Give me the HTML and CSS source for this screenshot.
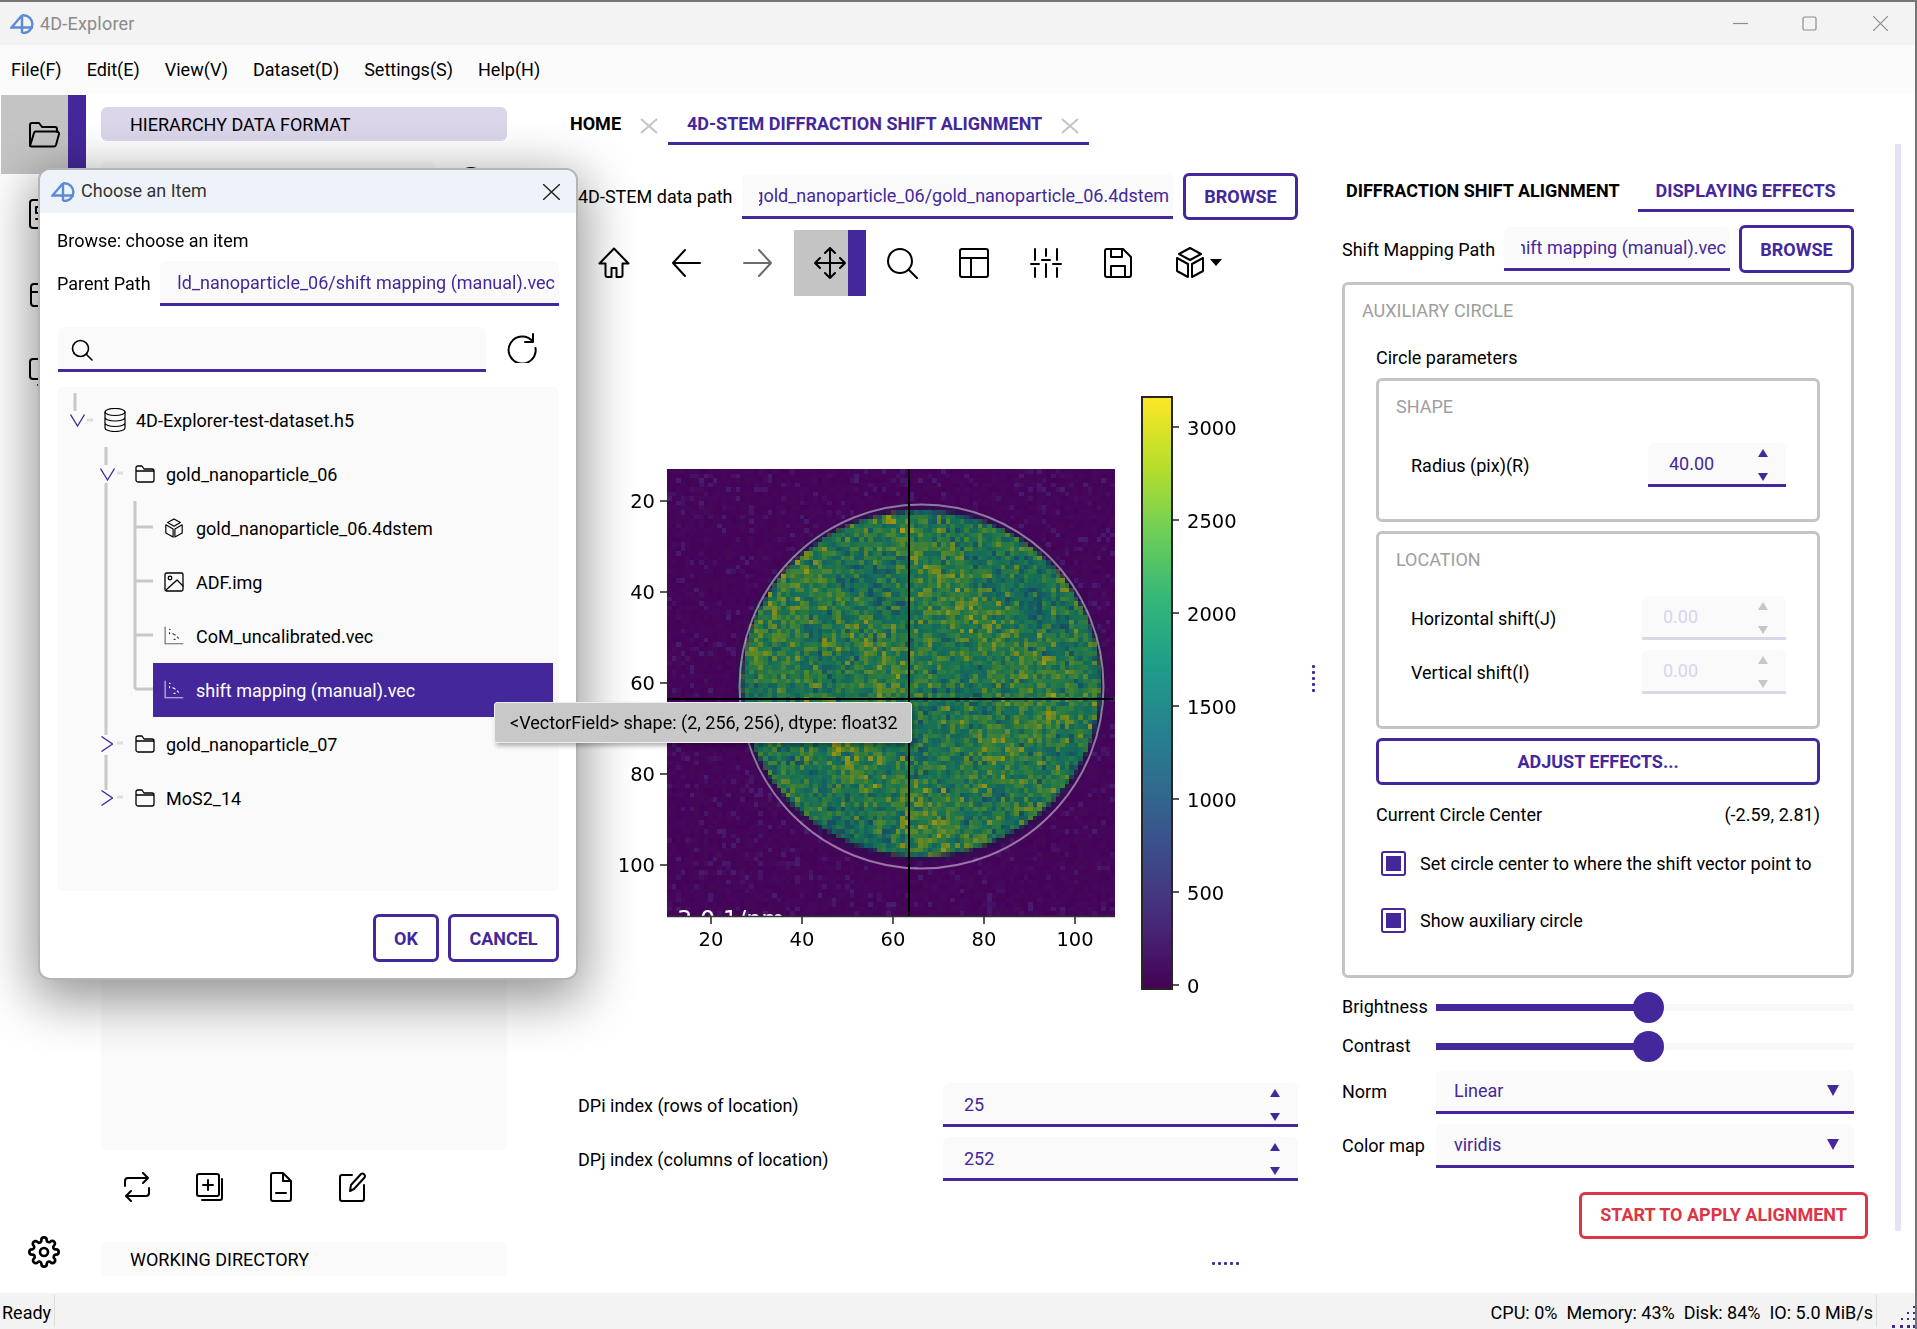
FILE: index.html
```html
<!DOCTYPE html>
<html lang="en">
<head>
<meta charset="utf-8">
<title>4D-Explorer</title>
<link rel="stylesheet" href="styles.css">
</head>
<body>
<div class="app">
  <header class="titlebar">
    <svg class="logo" viewBox="0 0 24 20"><path d="M12 1.2 1.5 13.5H23M12 1.2V19M12 1.2h1.5a8.9 8.9 0 0 1 0 17.8H12"/></svg>
    <span class="app-name">4D-Explorer</span>
    <div class="win-btns">
      <svg class="win-min" viewBox="0 0 15 15"><path d="M0 7.5h15"/></svg>
      <svg class="win-max" viewBox="0 0 15 15"><rect x="1" y="1" width="13" height="13" rx="1.5"/></svg>
      <svg class="win-close" viewBox="0 0 15 15"><path d="M0 0l15 15M15 0 0 15"/></svg>
    </div>
  </header>
  <nav class="menubar">
    <span>File(F)</span><span>Edit(E)</span><span>View(V)</span><span>Dataset(D)</span><span>Settings(S)</span><span>Help(H)</span>
  </nav>
  <div class="workspace">
    <aside class="activity">
      <div class="act-item act-selected">
        <svg class="ico ico-32" viewBox="0 0 32 28"><path d="M2 25V4a2 2 0 0 1 2-2h7l3 4h13a2 2 0 0 1 2 2v3M2 25l4-13a2 2 0 0 1 2-1.400h21a2 2 0 0 1 2 2.400l-3 11a2 2 0 0 1-2 1.400H3z"/></svg>
      </div>
      <div class="act-item">
        <svg class="ico ico-32" viewBox="0 0 32 32"><rect x="2" y="2" width="28" height="28" rx="3"/><path d="M8 9h10M8 9v6h8v6H8"/></svg>
      </div>
      <div class="act-item">
        <svg class="ico ico-32" viewBox="0 0 32 32"><rect x="3" y="7" width="26" height="22" rx="3"/><path d="M3 15h26M11 7l6-5 6 5"/></svg>
      </div>
      <div class="act-item">
        <svg class="ico ico-32" viewBox="0 0 32 32"><rect x="2" y="3" width="28" height="20" rx="3"/><path d="M16 23v5M10 29h12"/></svg>
      </div>
      <div class="act-gear">
        <svg class="ico ico-32" viewBox="0 0 24 24"><circle cx="12" cy="12" r="3"/><path d="M19.400 15a1.650 1.650 0 0 0 .33 1.820l.06.06a2 2 0 1 1-2.830 2.830l-.06-.06a1.650 1.650 0 0 0-2.820 1.170V21a2 2 0 0 1-4 0v-.09A1.650 1.650 0 0 0 7.260 19.740l-.06.06a2 2 0 1 1-2.830-2.830l.06-.06A1.650 1.650 0 0 0 3.090 14H3a2 2 0 0 1 0-4h.09A1.650 1.650 0 0 0 4.260 7.260l-.06-.06a2 2 0 1 1 2.830-2.830l.06.06A1.650 1.650 0 0 0 10 3.090V3a2 2 0 0 1 4 0v.09a1.650 1.650 0 0 0 2.740 1.170l.06-.06a2 2 0 1 1 2.830 2.830l-.06.06A1.650 1.650 0 0 0 20.910 10H21a2 2 0 0 1 0 4h-.09a1.650 1.650 0 0 0-1.510 1z"/></svg>
      </div>
    </aside>

    <section class="panel">
      <div class="panel-head panel-head-on">HIERARCHY DATA FORMAT</div>
      <div class="panel-search">
        <div class="panel-search-box"></div>
        <svg class="ico ico-30" viewBox="0 0 30 30"><circle cx="15" cy="15" r="13"/></svg>
      </div>
      <div class="panel-list"></div>
      <div class="panel-tools">
        <span class="tool"><svg class="ico ico-30" viewBox="0 0 30 30"><path d="M21 1l5 5-5 5M26 6H6a3 3 0 0 0-3 3v5M9 29l-5-5 5-5M4 24h20a3 3 0 0 0 3-3v-5"/></svg></span>
        <span class="tool"><svg class="ico ico-30" viewBox="0 0 30 30"><path d="M5 2h18a2 2 0 0 1 2 2v18a2 2 0 0 1-2 2H5a2 2 0 0 1-2-2V4a2 2 0 0 1 2-2zM28 7v19a2 2 0 0 1-2 2H8M14 8v10M9 13h10"/></svg></span>
        <span class="tool"><svg class="ico ico-30" viewBox="0 0 30 30"><path d="M7 1h10l8 8v18a2 2 0 0 1-2 2H7a2 2 0 0 1-2-2V3a2 2 0 0 1 2-2zM17 1v8h8M10 21h10"/></svg></span>
        <span class="tool"><svg class="ico ico-30" viewBox="0 0 30 30"><path d="M14 3H4a2 2 0 0 0-2 2v22a2 2 0 0 0 2 2h20a2 2 0 0 0 2-2V13M12 19l1-6L23 2c2-1.500 5 1 3.500 3.500L16 17z"/></svg></span>
      </div>
      <div class="panel-head panel-head-off">WORKING DIRECTORY</div>
    </section>

    <main class="center">
      <div class="tabs">
        <span class="tab-home">HOME</span>
        <svg class="tab-x" viewBox="0 0 18 16"><path d="M1 1l16 14M17 1 1 15"/></svg>
        <div class="tab-active">
          <span>4D-STEM DIFFRACTION SHIFT ALIGNMENT</span>
          <svg class="tab-x" viewBox="0 0 18 16"><path d="M1 1l16 14M17 1 1 15"/></svg>
        </div>
      </div>
      <div class="path-row">
        <span class="path-label">4D-STEM data path</span>
        <div class="field field-data"><div class="clip"><span>gold_nanoparticle_06/gold_nanoparticle_06.4dstem</span></div></div>
        <button class="btn btn-browse">BROWSE</button>
      </div>
      <div class="toolbar">
        <span class="tb"><svg class="ico ico-32" viewBox="0 0 32 32"><path d="M16 1.500 1.500 16.500h6V28a2 2 0 0 0 2 2h4v-9h5v9h4a2 2 0 0 0 2-2V16.500h6z"/></svg></span>
        <span class="tb"><svg class="ico ico-32" viewBox="0 0 32 32"><path d="M30 16H3M15 3 3 16l12 13"/></svg></span>
        <span class="tb tb-dim"><svg class="ico ico-32" viewBox="0 0 32 32"><path d="M2 16h27M17 3l12 13-12 13"/></svg></span>
        <span class="tb tb-on"><svg class="ico ico-32" viewBox="0 0 32 32"><path d="M16 1v30M1 16h30M11 6l5-5 5 5M11 26l5 5 5-5M6 11l-5 5 5 5M26 11l5 5-5 5"/></svg></span>
        <span class="tb"><svg class="ico ico-32" viewBox="0 0 32 32"><circle cx="14" cy="14" r="12"/><path d="M23 23l8 8"/></svg></span>
        <span class="tb"><svg class="ico ico-32" viewBox="0 0 32 32"><rect x="2" y="2" width="28" height="28" rx="2"/><path d="M2 11h28M13 11v19"/></svg></span>
        <span class="tb"><svg class="ico ico-32" viewBox="0 0 32 32"><path d="M5 2v11M5 21v9M16 2v7M16 17v13M27 2v11M27 21v9M12 13h8M1 17h8M23 17h8"/></svg></span>
        <span class="tb"><svg class="ico ico-32" viewBox="0 0 32 32"><path d="M5 2h16l8 8v18a2 2 0 0 1-2 2H5a2 2 0 0 1-2-2V4a2 2 0 0 1 2-2zM9 2v8h11V2M9 30V19h14v11"/></svg></span>
        <span class="tb tb-3d"><svg class="ico ico-32" viewBox="0 0 32 32"><path d="M16 1l11 6-11 6L5 7zM3 11l11 6v13L3 24zM29 11l-11 6v13l11-6z"/></svg><i class="caret"></i></span>
      </div>

      <div class="plot">
        <canvas class="plot-image" id="diffraction" width="98" height="98"></canvas>
        <svg class="plot-axes" viewBox="578 296 720 787">
          <defs>
            <linearGradient id="viridis" x1="0" y1="1" x2="0" y2="0">
              <stop offset="0" stop-color="#440154"/><stop offset=".11" stop-color="#482878"/><stop offset=".22" stop-color="#3e4989"/><stop offset=".33" stop-color="#31688e"/><stop offset=".44" stop-color="#26828e"/><stop offset=".55" stop-color="#1f9e89"/><stop offset=".66" stop-color="#35b779"/><stop offset=".77" stop-color="#6ece58"/><stop offset=".88" stop-color="#b5de2b"/><stop offset="1" stop-color="#fde725"/>
            </linearGradient>
            <clipPath id="imgclip"><rect x="667" y="469" width="448" height="447"/></clipPath>
          </defs>
          <g clip-path="url(#imgclip)">
            <text class="scale-text" x="677" y="928">3.0 1/nm</text>
            <circle class="aux-circle" cx="921.500" cy="686.500" r="182"/>
          </g>
          <path class="cross" d="M909 469V916M667 699H1113"/>
          <path class="frame" d="M667 916.500H1115"/>
          <path class="tick" d="M660 501h7M660 592h7M660 683h7M660 774h7M660 865h7M711 917v7M802 917v7M893 917v7M984 917v7M1075 917v7"/>
          <g class="ytl">
            <text x="655" y="508">20</text><text x="655" y="599">40</text><text x="655" y="690">60</text><text x="655" y="781">80</text><text x="655" y="872">100</text>
          </g>
          <g class="xtl">
            <text x="711" y="946">20</text><text x="802" y="946">40</text><text x="893" y="946">60</text><text x="984" y="946">80</text><text x="1075" y="946">100</text>
          </g>
          <rect class="cbar" x="1142" y="397" width="30" height="592" fill="url(#viridis)"/>
          <path class="tick" d="M1172 427h7M1172 520h7M1172 613h7M1172 706h7M1172 799h7M1172 892h7M1172 985h7"/>
          <g class="ctl">
            <text x="1187" y="435">3000</text><text x="1187" y="528">2500</text><text x="1187" y="621">2000</text><text x="1187" y="714">1500</text><text x="1187" y="807">1000</text><text x="1187" y="900">500</text><text x="1187" y="993">0</text>
          </g>
        </svg>
      </div>

      <div class="dp-row">
        <span class="dp-label">DPi index (rows of location)</span>
        <div class="spin spin-dp"><span>25</span><div class="arrows"><i class="up"></i><i class="down"></i></div></div>
      </div>
      <div class="dp-row dp-row-2">
        <span class="dp-label">DPj index (columns of location)</span>
        <div class="spin spin-dp"><span>252</span><div class="arrows"><i class="up"></i><i class="down"></i></div></div>
      </div>
      <div class="hsplit"><i></i><i></i><i></i><i></i><i></i></div>
    </main>

    <div class="vsplit"><i></i><i></i><i></i><i></i><i></i></div>

    <aside class="right">
      <div class="rtabs">
        <span class="rtab">DIFFRACTION SHIFT ALIGNMENT</span>
        <span class="rtab rtab-on">DISPLAYING EFFECTS</span>
      </div>
      <div class="shift-row">
        <span class="shift-label">Shift Mapping Path</span>
        <div class="field field-shift"><div class="clip"><span>shift mapping (manual).vec</span></div></div>
        <button class="btn btn-browse">BROWSE</button>
      </div>
      <section class="group group-aux">
        <h3 class="group-title aux-title">AUXILIARY CIRCLE</h3>
        <div class="line line-params">Circle parameters</div>
        <section class="group group-shape">
          <h3 class="group-title">SHAPE</h3>
          <div class="param param-first">
            <span>Radius (pix)(R)</span>
            <div class="spin spin-radius"><span>40.00</span><div class="arrows"><i class="up"></i><i class="down"></i></div></div>
          </div>
        </section>
        <section class="group group-loc">
          <h3 class="group-title">LOCATION</h3>
          <div class="param param-first">
            <span>Horizontal shift(J)</span>
            <div class="spin spin-off"><span>0.00</span><div class="arrows"><i class="up"></i><i class="down"></i></div></div>
          </div>
          <div class="param param-next">
            <span>Vertical shift(I)</span>
            <div class="spin spin-off"><span>0.00</span><div class="arrows"><i class="up"></i><i class="down"></i></div></div>
          </div>
        </section>
        <button class="btn btn-adjust">ADJUST EFFECTS...</button>
        <div class="line line-center"><span>Current Circle Center</span><span>(-2.59, 2.81)</span></div>
        <label class="check check-1"><i class="box"></i><span>Set circle center to where the shift vector point to</span></label>
        <label class="check check-2"><i class="box"></i><span>Show auxiliary circle</span></label>
      </section>
      <div class="ctrl ctrl-bright">
        <span class="ctrl-label">Brightness</span>
        <div class="slider"><div class="slider-fill"></div><i class="thumb"></i></div>
      </div>
      <div class="ctrl ctrl-contrast">
        <span class="ctrl-label">Contrast</span>
        <div class="slider"><div class="slider-fill"></div><i class="thumb"></i></div>
      </div>
      <div class="ctrl ctrl-norm">
        <span class="ctrl-label">Norm</span>
        <div class="combo"><span>Linear</span><i class="combo-arrow"></i></div>
      </div>
      <div class="ctrl ctrl-cmap">
        <span class="ctrl-label">Color map</span>
        <div class="combo"><span>viridis</span><i class="combo-arrow"></i></div>
      </div>
      <button class="btn btn-start">START TO APPLY ALIGNMENT</button>
    </aside>
    <div class="scrolltrack"></div>
  </div>
  <footer class="statusbar">
    <span class="st-ready">Ready</span>
    <i class="st-sep"></i>
    <span class="st-res">CPU: 0%&nbsp;&nbsp;Memory: 43%&nbsp;&nbsp;Disk: 84%&nbsp;&nbsp;IO: 5.0 MiB/s</span>
    <i class="st-sep"></i>
    <svg class="grip" viewBox="0 0 24 24"><path d="M22 2h2v2h-2zM16 8h2v2h-2zM22 8h2v2h-2zM10 14h2v2h-2zM16 14h2v2h-2zM22 14h2v2h-2zM1 21h3v3H1zM9 21h3v3H9zM16 21h3v3h-3zM22 21h2v3h-2z"/></svg>
  </footer>
</div>

<div class="dialog">
  <div class="dlg-head">
    <svg class="logo" viewBox="0 0 24 20"><path d="M12 1.2 1.5 13.500H23M12 1.2V19M12 1.2h1.500a8.900 8.900 0 0 1 0 17.800H12"/></svg>
    <span class="dlg-title">Choose an Item</span>
    <svg class="dlg-close" viewBox="0 0 17 16"><path d="M0 0l17 16M17 0 0 16"/></svg>
  </div>
  <div class="dlg-body">
    <div class="dlg-browse">Browse: choose an item</div>
    <div class="dlg-parent">
      <span class="dlg-parent-label">Parent Path</span>
      <div class="field field-parent"><div class="clip"><span>gold_nanoparticle_06/shift mapping (manual).vec</span></div></div>
    </div>
    <div class="dlg-search">
      <div class="searchbox"><svg class="ico ico-search" viewBox="0 0 22 22"><circle cx="9.500" cy="9.500" r="8"/><path d="M15 15l6 6"/></svg></div>
      <svg class="ico ico-refresh" viewBox="0 0 32 32"><path d="M27 3v8h-8M27 11A13.500 13.500 0 1 0 29.500 17"/></svg>
    </div>
    <div class="tree">
      <svg class="tree-lines" viewBox="0 0 502 504">
        <path d="M18 6v18M49 60v18M49 96v252M49 368v35M78 114v188M78 140h18M78 194h18M78 248h18M78 302h18"/>
        <path class="stub" d="M30 33h6M60 86h6M60 356h6M60 410h6"/>
      </svg>
      <div class="row d0">
        <svg class="chev" viewBox="0 0 15 13"><path d="M0.500 0.500 7.500 12 14.500 0.500"/></svg>
        <svg class="ico ico-node ico-db" viewBox="0 0 22 24"><ellipse cx="11" cy="4" rx="10" ry="3.500"/><path d="M1 4v16c0 2 4.500 3.500 10 3.500s10-1.500 10-3.500V4M1 9.500c0 2 4.500 3.500 10 3.500s10-1.500 10-3.500M1 15c0 2 4.500 3.500 10 3.500S21 17 21 15"/></svg>
        <span>4D-Explorer-test-dataset.h5</span>
      </div>
      <div class="row d1">
        <svg class="chev" viewBox="0 0 15 13"><path d="M0.500 0.500 7.500 12 14.500 0.500"/></svg>
        <svg class="ico ico-node" viewBox="0 0 20 18"><path d="M1 3a2 2 0 0 1 2-2h4l2 3h8a2 2 0 0 1 2 2v9a2 2 0 0 1-2 2H3a2 2 0 0 1-2-2zM1 6h18"/></svg>
        <span>gold_nanoparticle_06</span>
      </div>
      <div class="row d2">
        <svg class="ico ico-node ico-cube" viewBox="0 0 22 22"><path d="M11 1l7 4-7 4-7-4zM2 7.500 10 12v9l-8-4.500zM20 7.500 12 12v9l8-4.500z"/></svg>
        <span>gold_nanoparticle_06.4dstem</span>
      </div>
      <div class="row d2">
        <svg class="ico ico-node" viewBox="0 0 20 20"><rect x="1" y="1" width="18" height="18" rx="1.500"/><circle cx="6" cy="6" r="1.800"/><path d="M2 18 13 8l6 6"/></svg>
        <span>ADF.img</span>
      </div>
      <div class="row d2">
        <svg class="ico ico-node ico-vec" viewBox="0 0 18 18"><path d="M1 1v15h16"/><path class="vec-dots" d="M5 3h.500M5 6v1M8 7l2 1M12 10l1 1M9 12h1"/></svg>
        <span>CoM_uncalibrated.vec</span>
      </div>
      <div class="row d2 row-on">
        <svg class="ico ico-node ico-vec" viewBox="0 0 18 18"><path d="M1 1v15h16"/><path class="vec-dots" d="M5 3h.500M5 6v1M8 7l2 1M12 10l1 1M9 12h1"/></svg>
        <span>shift mapping (manual).vec</span>
      </div>
      <div class="row d1">
        <svg class="chev chev-r" viewBox="0 0 12 16"><path d="M0.500 0.500 11.500 8 0.500 15.500"/></svg>
        <svg class="ico ico-node" viewBox="0 0 20 18"><path d="M1 3a2 2 0 0 1 2-2h4l2 3h8a2 2 0 0 1 2 2v9a2 2 0 0 1-2 2H3a2 2 0 0 1-2-2zM1 6h18"/></svg>
        <span>gold_nanoparticle_07</span>
      </div>
      <div class="row d1">
        <svg class="chev chev-r" viewBox="0 0 12 16"><path d="M0.500 0.500 11.500 8 0.500 15.500"/></svg>
        <svg class="ico ico-node" viewBox="0 0 20 18"><path d="M1 3a2 2 0 0 1 2-2h4l2 3h8a2 2 0 0 1 2 2v9a2 2 0 0 1-2 2H3a2 2 0 0 1-2-2zM1 6h18"/></svg>
        <span>MoS2_14</span>
      </div>
    </div>
    <div class="dlg-actions">
      <button class="btn btn-ok">OK</button>
      <button class="btn btn-cancel">CANCEL</button>
    </div>
  </div>
</div>
<div class="tooltip">&lt;VectorField&gt; shape: (2, 256, 256), dtype: float32</div>
<script src="plot.js"></script>
</body>
</html>
```
FILE: styles.css
```css
* { box-sizing: border-box; }
html, body { margin: 0; padding: 0; }
body {
  position: relative;
  width: 1917px;
  height: 1329px;
  overflow: hidden;
  background: #fff;
  font-family: Roboto, "Liberation Sans", sans-serif;
  font-size: 18px;
  color: #000;
}
.app {
  display: flex;
  flex-direction: column;
  height: 1329px;
  border-top: 2px solid #757575;
  border-right: 2px solid #757575;
}
.ico { fill: none; stroke: currentColor; stroke-width: 2; stroke-linecap: round; stroke-linejoin: round; flex: none; }
.ico-32 { width: 32px; height: 32px; }
.ico-30 { width: 30px; height: 30px; }

/* title + menu */
.titlebar { display: flex; align-items: center; height: 43px; background: #f3f3f3; padding-left: 10px; }
.logo { width: 24px; height: 20px; fill: none; stroke: #5b8bd6; stroke-width: 2.400; flex: none; }
.app-name { margin-left: 6px; color: #8a8a8a; letter-spacing: .2px; }
.win-btns { margin-left: auto; display: flex; align-items: center; margin-right: 27px; }
.win-btns svg { width: 15px; height: 15px; fill: none; stroke: #8c8c8c; stroke-width: 1.200; }
.win-max { margin-left: 54px; }
.win-close { margin-left: 56px; }
.menubar { display: flex; align-items: center; height: 48px; background: #fbfbfb; padding-left: 11px; gap: 25px; }

/* workspace */
.workspace { flex: 1; display: flex; min-height: 0; position: relative; }

.activity { width: 86px; flex: none; display: flex; flex-direction: column; padding-top: 2px; padding-left: 1px; }
.act-item { height: 79px; display: flex; align-items: center; justify-content: center; flex: none; }
.act-selected { background: linear-gradient(to right, #c4c4c4 67px, #44289b 67px); }
.act-gear { margin-top: auto; margin-bottom: 25px; display: flex; justify-content: center; }

.panel { width: 406px; margin-left: 15px; flex: none; padding-top: 14px; display: flex; flex-direction: column; }
.panel-head { height: 34px; border-radius: 6px; padding-left: 29px; display: flex; align-items: center; flex: none; }
.panel-head-on { background: #dbd6ea; }
.panel-head-off { background: #fafafa; margin-top: 38px; }
.panel-search { display: flex; align-items: center; margin-top: 20px; height: 34px; flex: none; justify-content: space-between; padding-right: 21px; }
.panel-search .ico { margin-top: 6px; }
.panel-search-box { width: 334px; height: 34px; background: #fafafa; border-radius: 6px; }
.panel-list { height: 945px; margin-top: 10px; background: #fafafa; border-radius: 6px; flex: none; }
.panel-tools { display: flex; margin-top: 20px; height: 34px; flex: none; }
.tool { width: 72px; display: flex; align-items: center; justify-content: center; }

/* center */
.center { width: 728px; margin-left: 63px; flex: none; padding-top: 12px; display: flex; flex-direction: column; }
.tabs { display: flex; align-items: flex-start; height: 40px; flex: none; }
.tab-home { font-weight: 700; height: 37px; display: flex; align-items: center; width: 70px; }
.tab-x { width: 18px; height: 16px; fill: none; stroke: #c4c4c4; stroke-width: 2; flex: none; }
.tabs > .tab-x { margin-top: 13px; }
.tab-active .tab-x { margin-top: 4px; }
.tab-active { display: flex; align-items: center; margin-left: 10px; width: 421px; height: 40px; padding-left: 19px; gap: 19px; color: #44289b; font-weight: 700; border-bottom: 3px solid #44289b; white-space: nowrap; }
.path-row { display: flex; align-items: center; height: 47px; margin-top: 28px; margin-left: 8px; flex: none; }
.path-label { width: 164px; flex: none; white-space: nowrap; }
.field { height: 45px; background: #fafafa; border-bottom: 3px solid #44289b; border-radius: 6px 6px 0 0; color: #44289b; display: flex; align-items: center; padding: 0 4px 0 17px; flex: none; }
.clip { overflow: hidden; display: flex; justify-content: flex-end; white-space: nowrap; width: 100%; }
.clip span { flex: none; }
.field-data { width: 431px; padding-left: 17px; }
.btn { font: 700 18px Roboto, "Liberation Sans", sans-serif; color: #44289b; background: #fff; border: 3px solid #44289b; border-radius: 6px; padding: 0; flex: none; }
.btn-browse { width: 115px; height: 47px; margin-left: 10px; }
.toolbar { display: flex; height: 66px; margin-top: 10px; margin-left: 8px; flex: none; }
.tb { width: 72px; height: 66px; display: flex; align-items: center; justify-content: center; position: relative; }
.tb-dim { color: #6b6b6b; }
.tb-on { background: linear-gradient(to right, #c4c4c4 54px, #44289b 54px); }
.tb-3d .caret { position: absolute; left: 56px; top: 29px; width: 0; height: 0; border-left: 6px solid transparent; border-right: 6px solid transparent; border-top: 7px solid #000; }

.plot { position: relative; width: 720px; height: 787px; margin-left: 8px; flex: none; }
.plot-image { position: absolute; left: 89px; top: 173px; width: 448px; height: 447px; image-rendering: pixelated; }
.plot-axes { position: absolute; left: 0; top: 0; width: 720px; height: 787px; }
.plot-axes text { font-family: "DejaVu Sans", sans-serif; font-size: 19.500px; fill: #000; }
.plot-axes .scale-text { font-size: 24px; fill: #fff; }
.aux-circle { fill: none; stroke: rgba(255,255,255,.45); stroke-width: 2; }
.cross { fill: none; stroke: #000; stroke-width: 2; }
.frame { stroke: #333; stroke-width: 1.500; fill: none; }
.tick { fill: none; stroke: #222; stroke-width: 1.500; }
.ytl text { text-anchor: end; }
.xtl text { text-anchor: middle; }
.cbar { stroke: #262626; stroke-width: 2; }

.dp-row { display: flex; align-items: center; height: 44px; margin-left: 8px; flex: none; }
.dp-row-2 { margin-top: 10px; }
.dp-label { width: 365px; flex: none; white-space: nowrap; }
.spin { height: 44px; background: #fafafa; border-bottom: 3px solid #44289b; border-radius: 6px 6px 0 0; color: #44289b; display: flex; align-items: center; justify-content: space-between; padding-left: 21px; padding-right: 18px; flex: none; }
.spin-dp { width: 355px; }
.spin-dp > span { margin-top: 2px; }
.spin-radius { width: 138px; }
.spin-off { width: 144px; color: #d9d3ec; border-bottom-color: #dbd6ea; }
.arrows { display: flex; flex-direction: column; justify-content: space-between; height: 100%; padding: 6px 0 3px; }
.arrows i { display: block; width: 0; height: 0; border-left: 5px solid transparent; border-right: 5px solid transparent; }
.arrows .up { border-bottom: 8px solid #44289b; }
.arrows .down { border-top: 8px solid #44289b; }
.spin-off .arrows .up { border-bottom-color: #c6c6c6; }
.spin-off .arrows .down { border-top-color: #c6c6c6; }
.hsplit { display: flex; gap: 3px; margin-top: 81px; margin-left: 642px; flex: none; }
.hsplit i, .vsplit i { display: block; width: 3px; height: 3px; background: #44289b; border-radius: 1px; }

.vsplit { width: 44px; flex: none; display: flex; flex-direction: column; gap: 3px; padding-top: 572px; padding-left: 14px; }

/* right */
.right { width: 526px; flex: none; padding-top: 82px; padding-right: 14px; display: flex; flex-direction: column; }
.rtabs { display: flex; height: 37px; flex: none; font-weight: 700; }
.rtab { margin-left: 4px; padding-right: 18px; padding-top: 5px; display: block; white-space: nowrap; }
.rtab-on { width: 216px; padding-left: 18px; padding-right: 0; margin-left: 0; color: #44289b; border-bottom: 3px solid #44289b; }
.shift-row { display: flex; align-items: center; height: 48px; margin-top: 13px; flex: none; }
.shift-label { width: 162px; flex: none; white-space: nowrap; }
.field-shift { width: 226px; height: 44px; padding-left: 17px; }
.shift-row .btn-browse { margin-left: 9px; height: 48px; width: 115px; }
.group { border: 3px solid #c4c4c4; border-radius: 6px; flex: none; }
.group-title { margin: 0; height: 28px; font-size: 18px; font-weight: 400; color: #9e9e9e; display: flex; align-items: center; }
.group-aux { height: 696px; margin-top: 9px; padding: 11px 31px 0; }
.aux-title { margin-left: -14px; }
.line { height: 28px; display: flex; align-items: center; }
.line-params { margin-top: 19px; }
.group-shape { height: 144px; margin-top: 7px; padding: 11px 31px 0 17px; }
.group-loc { height: 198px; margin-top: 9px; padding: 11px 31px 0 17px; }
.param { display: flex; align-items: center; justify-content: space-between; margin-left: 15px; height: 44px; }
.param-first { margin-top: 23px; }
.param-next { margin-top: 10px; }
.btn-adjust { display: block; width: 100%; height: 47px; margin-top: 9px; }
.line-center { margin-top: 15px; justify-content: space-between; }
.check { display: flex; align-items: center; height: 25px; margin-left: 5px; gap: 14px; white-space: nowrap; }
.check-1 { margin-top: 23px; }
.check-2 { margin-top: 32px; }
.box { width: 25px; height: 25px; border: 2px solid #44289b; border-radius: 3px; padding: 3px; background: #fff content-box; flex: none; position: relative; }
.box::after { content: ""; display: block; width: 15px; height: 15px; background: #44289b; }
.ctrl { display: flex; align-items: center; flex: none; }
.ctrl-label { width: 94px; flex: none; white-space: nowrap; margin-top: -2px; }
.ctrl-bright { height: 30px; margin-top: 14px; }
.ctrl-contrast { height: 30px; margin-top: 9px; }
.ctrl-norm { height: 44px; margin-top: 9px; }
.ctrl-cmap { height: 44px; margin-top: 10px; }
.slider { position: relative; flex: 1; height: 7px; background: #f8f8f8; }
.slider-fill { width: 212px; height: 7px; background: #44289b; }
.thumb { position: absolute; left: 197px; top: -12px; width: 31px; height: 31px; background: #44289b; border-radius: 50%; }
.combo { flex: 1; height: 44px; background: #fafafa; border-bottom: 3px solid #44289b; border-radius: 6px 6px 0 0; color: #44289b; display: flex; align-items: center; justify-content: space-between; padding: 0 15px 0 18px; }
.combo-arrow { width: 0; height: 0; border-left: 6px solid transparent; border-right: 6px solid transparent; border-top: 11px solid #44289b; }
.btn-start { align-self: flex-end; margin-right: -14px; margin-top: 24px; width: 289px; height: 47px; padding-bottom: 2px; color: #dc3545; border-color: #dc3545; }
.scrolltrack { position: absolute; left: 1895px; top: 51px; width: 6px; height: 1087px; background: #e5e3f0; }

/* status */
.statusbar { height: 36px; background: #f3f3f3; display: flex; align-items: center; flex: none; padding-left: 2px; }
.st-ready { width: 52px; margin-top: 2px; }
.st-sep { display: block; width: 1px; height: 32px; background: #dcdcdc; flex: none; }
.st-res { margin-left: auto; margin-right: 3px; margin-top: 2px; white-space: nowrap; }
.grip { width: 24px; height: 24px; margin-left: 14px; margin-top: 10px; fill: #44289b; flex: none; }

/* dialog */
.dialog { position: absolute; left: 38px; top: 168px; width: 540px; height: 812px; background: #fff; border: 2px solid #b4b4b4; border-radius: 12px; box-shadow: 0 14px 52px 6px rgba(0,0,0,.42); }
.dlg-head { display: flex; align-items: center; height: 43px; background: #eef3fa; padding-left: 11px; border-radius: 10px 10px 0 0; }
.dlg-title { margin-left: 6px; margin-bottom: 2px; color: #333; }
.dlg-close { width: 17px; height: 16px; margin-left: auto; margin-right: 16px; fill: none; stroke: #222; stroke-width: 1.400; }
.dlg-body { padding: 13px 17px 0; }
.dlg-browse { height: 28px; display: flex; align-items: center; }
.dlg-parent { display: flex; align-items: center; margin-top: 7px; height: 45px; }
.dlg-parent-label { width: 103px; flex: none; white-space: nowrap; }
.field-parent { width: 399px; }
.dlg-search { display: flex; align-items: center; margin-top: 21px; height: 45px; }
.searchbox { width: 428px; height: 45px; margin-left: 1px; background: #fafafa; border-bottom: 3px solid #44289b; border-radius: 6px 6px 0 0; display: flex; align-items: center; padding-left: 13px; flex: none; }
.ico-search { width: 22px; height: 22px; stroke-width: 1.600; margin-top: 3px; }
.ico-refresh { width: 32px; height: 32px; margin-left: 20px; margin-top: -5px; }
.tree { position: relative; height: 504px; margin-top: 15px; background: #fafafa; border-radius: 6px; padding: 6px 6px 0 0; }
.tree-lines { position: absolute; left: 0; top: 0; width: 502px; height: 504px; fill: none; stroke: #c8c8c8; stroke-width: 3; }
.tree-lines .stub { stroke: #dedede; }
.row { position: relative; display: flex; align-items: center; height: 54px; white-space: nowrap; }
.chev { width: 15px; height: 13px; fill: none; stroke: #44289b; stroke-width: 1.300; flex: none; }
.chev-r { width: 12px; height: 16px; margin-left: 1px; margin-right: 2px; }
.ico-node { width: 20px; height: 20px; stroke-width: 1.300; flex: none; }
.d0 { padding-left: 13px; }
.d0 .ico-node { margin-left: 19px; width: 22px; height: 24px; stroke-width: 1.200; }
.d0 span { margin-left: 10px; }
.d1 { padding-left: 43px; }
.d1 .ico-node { margin-left: 20px; }
.d1 span { margin-left: 11px; }
.d2 { margin-left: 96px; padding-left: 11px; }
.d2 span { margin-left: 12px; }
.ico-vec { stroke: #666; stroke-width: 1; }
.vec-dots { stroke: #333; }
.row-on { background: #44289b; color: #fff; }
.row-on .ico-vec { stroke: #cfc9e6; }
.row-on .vec-dots { stroke: #fff; }
.dlg-actions { display: flex; justify-content: flex-end; gap: 9px; margin-top: 23px; }
.btn-ok { width: 66px; height: 48px; }
.btn-cancel { width: 111px; height: 48px; }

.tooltip { position: absolute; left: 494px; top: 702px; width: 418px; height: 41px; padding-left: 15px; display: flex; align-items: center; background: #c8c8c8; border: 1px solid #eee; border-radius: 3px; box-shadow: 2px 3px 4px rgba(0,0,0,.3); white-space: nowrap; }
```
FILE: plot.js
```js
(function () {
  var canvas = document.getElementById('diffraction');
  var ctx = canvas.getContext('2d');
  var seed = 20240611;
  function rnd() {
    seed = (seed + 0x6D2B79F5) | 0;
    var t = Math.imul(seed ^ (seed >>> 15), 1 | seed);
    t = (t + Math.imul(t ^ (t >>> 7), 61 | t)) ^ t;
    return ((t ^ (t >>> 14)) >>> 0) / 4294967296;
  }
  function gauss() { return (rnd() + rnd() + rnd() + rnd() - 2) / 0.577; }
  var stops = [[24, 78, 100], [20, 98, 96], [22, 112, 86], [46, 124, 62], [92, 134, 40], [140, 142, 26], [166, 152, 18]];
  function ramp(t) {
    t = Math.max(0, Math.min(0.9999, t)) * (stops.length - 1);
    var i = Math.floor(t), f = t - i, a = stops[i], b = stops[i + 1];
    return [a[0] + (b[0] - a[0]) * f, a[1] + (b[1] - a[1]) * f, a[2] + (b[2] - a[2]) * f];
  }
  function mix(a, b, f) { return [a[0] + (b[0] - a[0]) * f, a[1] + (b[1] - a[1]) * f, a[2] + (b[2] - a[2]) * f]; }
  var img = ctx.createImageData(98, 98);
  var cx = 55.6, cy = 47.0, rx = 39.6, ry = 38.2;
  for (var y = 0; y < 98; y++) {
    for (var x = 0; x < 98; x++) {
      var back = rnd() < 0.16 ? mix([68, 1, 84], [72, 36, 120], rnd() * 0.8) : [67 + rnd() * 3, 2 + rnd() * 6, 86 + rnd() * 6];
      var dx = (x + 0.5 - cx) / rx, dy = (y + 0.5 - cy) / ry;
      var d = Math.sqrt(dx * dx + dy * dy);
      var c = back;
      if (d < 1.04) {
        var low = 0.1 * Math.sin(x * 0.17 + 0.8) * Math.cos(y * 0.13 - 0.6) + 0.07 * Math.sin((x - y) * 0.21);
        var t = 0.42 + low + gauss() * 0.18;
        var disk = ramp(t);
        var edge = Math.max(0, Math.min(1, (1.0 - d) / 0.02));
        var dark = [44, 14, 78];
        c = d < 1.0 ? mix(dark, disk, edge) : mix(back, dark, Math.max(0, (1.04 - d) / 0.04));
      }
      var k = (y * 98 + x) * 4;
      img.data[k] = c[0]; img.data[k + 1] = c[1]; img.data[k + 2] = c[2]; img.data[k + 3] = 255;
    }
  }
  ctx.putImageData(img, 0, 0);
})();
```
